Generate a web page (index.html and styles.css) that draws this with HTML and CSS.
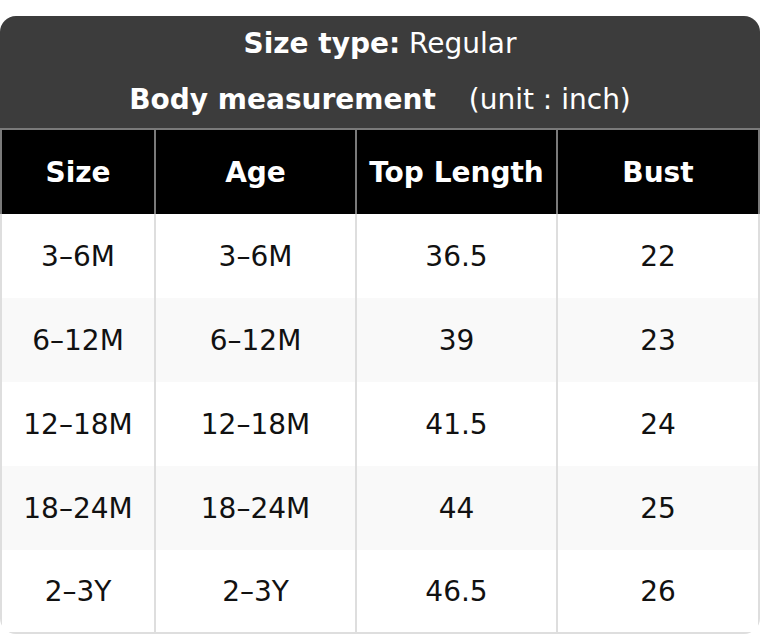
FILE: index.html
```html
<!DOCTYPE html>
<html>
<head>
<meta charset="utf-8">
<link rel="stylesheet" href="styles.css">
</head>
<body>
<div class="chart">
  <table class="size-table">
    <colgroup>
      <col class="c-size">
      <col class="c-age">
      <col class="c-top">
      <col class="c-bust">
    </colgroup>
    <thead>
      <tr>
        <th colspan="4" class="title">
          <div class="title-line"><b>Size type:</b> Regular</div>
          <div class="title-line"><b>Body measurement</b><span class="unit">(unit : inch)</span></div>
        </th>
      </tr>
      <tr class="head">
        <th>Size</th>
        <th>Age</th>
        <th>Top Length</th>
        <th>Bust</th>
      </tr>
    </thead>
    <tbody>
      <tr><td>3–6M</td><td>3–6M</td><td>36.5</td><td>22</td></tr>
      <tr class="alt"><td>6–12M</td><td>6–12M</td><td>39</td><td>23</td></tr>
      <tr><td>12–18M</td><td>12–18M</td><td>41.5</td><td>24</td></tr>
      <tr class="alt"><td>18–24M</td><td>18–24M</td><td>44</td><td>25</td></tr>
      <tr class="last"><td>2–3Y</td><td>2–3Y</td><td>46.5</td><td>26</td></tr>
    </tbody>
  </table>
</div>
</body>
</html>
```

FILE: styles.css
```css
html, body {
  margin: 0;
  padding: 0;
  background: #fff;
}
body {
  padding-top: 16px;
  font-family: "DejaVu Sans", "Liberation Sans", sans-serif;
  font-size: 28px;
  color: #111;
}
.chart {
  width: 760px;
  border-radius: 16px;
  overflow: hidden;
}
.size-table {
  width: 760px;
  border-collapse: separate;
  border-spacing: 0;
  table-layout: fixed;
}
.c-size { width: 156px; }
.c-age { width: 201px; }
.c-top { width: 201px; }
.c-bust { width: 202px; }

th, td {
  box-sizing: border-box;
  padding: 0;
  text-align: center;
  vertical-align: middle;
}
.title {
  background: #3c3c3c;
  color: #fff;
  font-weight: normal;
  height: 114px;
  border-bottom: 2px solid #7a7a7a;
}
.title-line {
  height: 56px;
  line-height: 56px;
}
.title-line b {
  font-weight: bold;
}
.unit {
  margin-left: 33px;
}
.head th {
  background: #000;
  color: #fff;
  font-weight: bold;
  height: 84px;
  border-right: 2px solid #7a7a7a;
}
.head th:first-child {
  border-left: 2px solid #7a7a7a;
}
td {
  height: 84px;
  border-right: 2px solid #dedede;
  background: #fff;
}
td:first-child {
  border-left: 2px solid #dedede;
}
tr.alt td {
  background: #f9f9f9;
}
tr.last td {
  border-bottom: 2px solid #dedede;
}
```
